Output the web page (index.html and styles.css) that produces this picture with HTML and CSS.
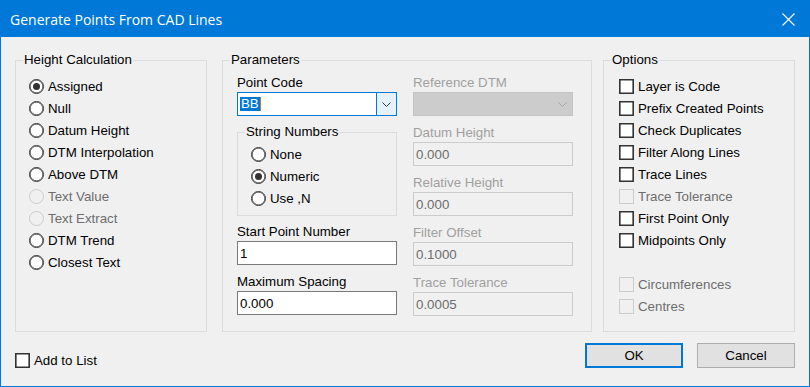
FILE: index.html
```html
<!DOCTYPE html>
<html lang="en">

<head>
  <meta charset="UTF-8">
  <title>Generate Points From CAD Lines</title>
  <link rel="stylesheet" href="styles.css">
</head>

<body>
  <div class="dialog">
    <div class="titlebar">
      <span class="title">Generate Points From CAD Lines</span>
      <svg class="close" width="13" height="13" viewBox="0 0 13 13">
        <path d="M0.5 0.5 L12.5 12.5 M12.5 0.5 L0.5 12.5" stroke="#fff" stroke-width="1.1" fill="none" />
      </svg>
    </div>

    <div class="content">
      <div class="groups">
        <fieldset class="group group--height">
          <legend>Height Calculation</legend>
          <div class="list">
            <div class="opt"><span class="radio radio--on"></span>Assigned</div>
            <div class="opt"><span class="radio"></span>Null</div>
            <div class="opt"><span class="radio"></span>Datum Height</div>
            <div class="opt"><span class="radio"></span>DTM Interpolation</div>
            <div class="opt"><span class="radio"></span>Above DTM</div>
            <div class="opt opt--off"><span class="radio"></span>Text Value</div>
            <div class="opt opt--off"><span class="radio"></span>Text Extract</div>
            <div class="opt"><span class="radio"></span>DTM Trend</div>
            <div class="opt"><span class="radio"></span>Closest Text</div>
          </div>
        </fieldset>

        <fieldset class="group group--params">
          <legend>Parameters</legend>
          <div class="params">
            <div class="col">
              <div class="field">
                <div class="field__label">Point Code</div>
                <div class="combo combo--focus">
                  <div class="combo__text"><span class="sel">BB</span><span class="caret"></span></div>
                  <div class="combo__btn">
                    <svg width="9" height="5" viewBox="0 0 9 5"><path d="M0.5 0.5 L4.5 4.5 L8.5 0.5" stroke="#3c3c3c" fill="none" /></svg>
                  </div>
                </div>
              </div>
              <fieldset class="group group--string">
                <legend>String Numbers</legend>
                <div class="list list--string">
                  <div class="opt"><span class="radio"></span>None</div>
                  <div class="opt"><span class="radio radio--on"></span>Numeric</div>
                  <div class="opt"><span class="radio"></span>Use ,N</div>
                </div>
              </fieldset>
              <div class="field">
                <div class="field__label">Start Point Number</div>
                <input class="edit" type="text" value="1">
              </div>
              <div class="field">
                <div class="field__label">Maximum Spacing</div>
                <input class="edit" type="text" value="0.000">
              </div>
            </div>

            <div class="col">
              <div class="field field--off">
                <div class="field__label">Reference DTM</div>
                <div class="combo combo--off">
                  <div class="combo__text"></div>
                  <div class="combo__btn">
                    <svg width="9" height="5" viewBox="0 0 9 5"><path d="M0.5 0.5 L4.5 4.5 L8.5 0.5" stroke="#a6a6a6" fill="none" /></svg>
                  </div>
                </div>
              </div>
              <div class="field field--off">
                <div class="field__label">Datum Height</div>
                <input class="edit" type="text" value="0.000" disabled>
              </div>
              <div class="field field--off">
                <div class="field__label">Relative Height</div>
                <input class="edit" type="text" value="0.000" disabled>
              </div>
              <div class="field field--off">
                <div class="field__label">Filter Offset</div>
                <input class="edit" type="text" value="0.1000" disabled>
              </div>
              <div class="field field--off">
                <div class="field__label">Trace Tolerance</div>
                <input class="edit" type="text" value="0.0005" disabled>
              </div>
            </div>
          </div>
        </fieldset>

        <fieldset class="group group--options">
          <legend>Options</legend>
          <div class="list list--options">
            <div class="opt"><span class="check"></span>Layer is Code</div>
            <div class="opt"><span class="check"></span>Prefix Created Points</div>
            <div class="opt"><span class="check"></span>Check Duplicates</div>
            <div class="opt"><span class="check"></span>Filter Along Lines</div>
            <div class="opt"><span class="check"></span>Trace Lines</div>
            <div class="opt opt--off"><span class="check"></span>Trace Tolerance</div>
            <div class="opt"><span class="check"></span>First Point Only</div>
            <div class="opt"><span class="check"></span>Midpoints Only</div>
            <div class="opt opt--gap"></div>
            <div class="opt opt--off"><span class="check"></span>Circumferences</div>
            <div class="opt opt--off"><span class="check"></span>Centres</div>
          </div>
        </fieldset>
      </div>

      <div class="footer">
        <div class="opt opt--add"><span class="check"></span>Add to List</div>
        <div class="buttons">
          <button class="btn btn--default">OK</button>
          <button class="btn">Cancel</button>
        </div>
      </div>
    </div>
  </div>
</body>

</html>
```

FILE: styles.css
```css
* {
  box-sizing: border-box;
}

body {
  margin: 0;
  background: #fff;
  font-family: "Liberation Sans", Arial, sans-serif;
  font-size: 13.3px;
  color: #000;
}

.dialog {
  width: 810px;
  height: 387px;
  background: #f0f0f0;
  border: 1px solid #0078d7;
  border-top: none;
  display: flex;
  flex-direction: column;
}

/* title bar */
.titlebar {
  height: 37px;
  background: #0078d7;
  display: flex;
  align-items: center;
  justify-content: space-between;
  padding: 0 14px 0 9px;
  color: #fff;
}

.title {
  font-family: "Open Sans", "Noto Sans", sans-serif;
  font-size: 14px;
  padding-top: 1px;
}

.close {
  display: block;
  margin-top: 1px;
}

/* body */
.content {
  flex: 1;
  padding: 15px 14px 0 14px;
}

.groups {
  display: flex;
  height: 280px;
}

.group {
  margin: 0;
  padding: 0;
  min-width: 0;
  border: 1px solid #dcdcdc;
}

.group legend {
  margin-left: 7px;
  padding: 0 1px;
  line-height: 16px;
}

.group--height {
  width: 192px;
}

.group--params {
  width: 370px;
  margin-left: 15px;
}

.group--options {
  width: 192px;
  margin-left: 11px;
}

.list {
  padding: 7px 0 0 13px;
}

.list--options {
  padding-left: 15px;
}

.list--string {
  padding-top: 3px;
}

.opt {
  height: 22px;
  display: flex;
  align-items: center;
  white-space: nowrap;
}

.opt--off {
  color: #6d6d6d;
}

/* radio + check */
.radio {
  width: 15px;
  height: 15px;
  margin-right: 4px;
  border-radius: 50%;
  border: 1px solid #333;
  box-shadow: inset 0 0 0 0.6px #333;
  background: #fff;
  display: flex;
  align-items: center;
  justify-content: center;
  flex: none;
}

.radio--on::after {
  content: "";
  width: 7px;
  height: 7px;
  border-radius: 50%;
  background: #333;
}

.opt--off .radio {
  border-color: #ccc;
  box-shadow: none;
  background: #f0f0f0;
}

.check {
  width: 15px;
  height: 15px;
  margin-right: 4px;
  border: 1px solid #333;
  box-shadow: inset 0 0 0 0.6px #333;
  background: #fff;
  flex: none;
}

.opt--off .check {
  border-color: #ccc;
  box-shadow: none;
  background: #f0f0f0;
}

/* parameters */
.params {
  display: flex;
  gap: 16px;
  padding: 6px 0 0 14px;
}

.col {
  width: 160px;
}

.field {
  margin-bottom: 8px;
}

.field__label {
  line-height: 16px;
  padding-top: 1px;
  height: 17px;
  margin-bottom: 1px;
  white-space: nowrap;
}

.field--off .field__label {
  color: #a0a0a0;
}

.edit {
  display: block;
  width: 160px;
  height: 24px;
  margin: 0;
  padding: 0 2px;
  border: 1px solid #7a7a7a;
  background: #fff;
  font: inherit;
  color: #000;
  outline: none;
}

.edit:disabled {
  border-color: #ccc;
  background: #f0f0f0;
  color: #6d6d6d;
}

.combo {
  display: flex;
  height: 24px;
  border: 1px solid #7a7a7a;
  background: #fff;
}

.combo__text {
  flex: 1;
  display: flex;
  align-items: center;
  padding-left: 2px;
}

.sel {
  background: #0078d7;
  color: #fff;
  line-height: 14px;
  padding: 0 1px;
}

.caret {
  width: 1px;
  height: 14px;
  background: #e0701a;
}

.combo__btn {
  width: 20px;
  display: flex;
  align-items: center;
  justify-content: center;
}

.combo--focus {
  border-color: #0078d7;
}

.combo--focus .combo__btn {
  background: #e5f1fb;
  border-left: 1px solid #0078d7;
}

.combo--off {
  background: #ccc;
  border-color: #c4c4c4;
}

.group--string {
  height: 92px;
  margin-top: 1px;
  margin-bottom: 7px;
}

/* footer */
.footer {
  display: flex;
  justify-content: space-between;
  align-items: flex-start;
}

.opt--add {
  margin-top: 17px;
}

.buttons {
  display: flex;
  gap: 14px;
  margin-top: 11px;
}

.btn {
  width: 98px;
  height: 25px;
  margin: 0;
  padding: 0;
  border: 1px solid #adadad;
  background: #e1e1e1;
  font: inherit;
  color: #000;
}

.btn--default {
  border: 2px solid #0078d7;
}
```
